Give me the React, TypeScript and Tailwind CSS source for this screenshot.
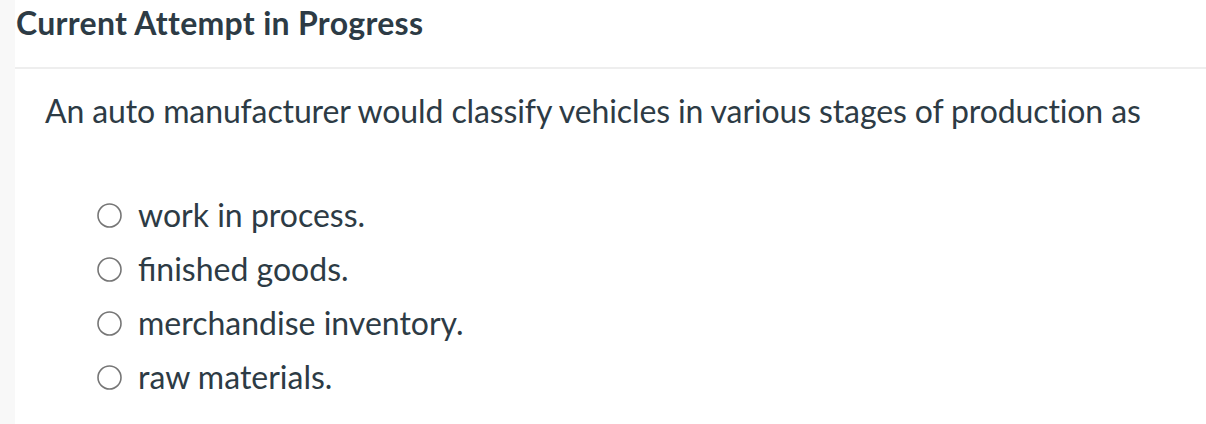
const options = ['work in process.', 'finished goods.', 'merchandise inventory.', 'raw materials.'];

export default function App() {
  return (
    <div className="flex w-[1206px] h-[424px] bg-white text-[#2d3b45] font-['Lato',sans-serif] overflow-hidden">
      <div className="w-[15px] shrink-0 bg-[#f8f8f8]" />
      <div className="flex-1">
        <div className="h-[69px] border-b-2 border-[#eeeeee] pl-[1px] pt-[3px]">
          <h1 className="text-[32px] font-bold leading-[40px] tracking-[0.3px]">Current Attempt in Progress</h1>
        </div>
        <p className="pl-[30px] pt-[22px] text-[32px] leading-[40px] tracking-[-0.12px]">
          An auto manufacturer would classify vehicles in various stages of production as
        </p>
        <div className="flex flex-col gap-[18px] pl-[82px] pt-[66px]">
          {options.map((o) => (
            <label key={o} className="flex items-center h-[36px] gap-[16px]">
              <svg width="25" height="25" viewBox="0 0 25 25" className="shrink-0">
                <circle cx="12.5" cy="12.5" r="11.5" fill="white" stroke="#767676" strokeWidth="1.6" />
              </svg>
              <span className="text-[32px] leading-[36px]">{o}</span>
            </label>
          ))}
        </div>
      </div>
    </div>
  );
}
